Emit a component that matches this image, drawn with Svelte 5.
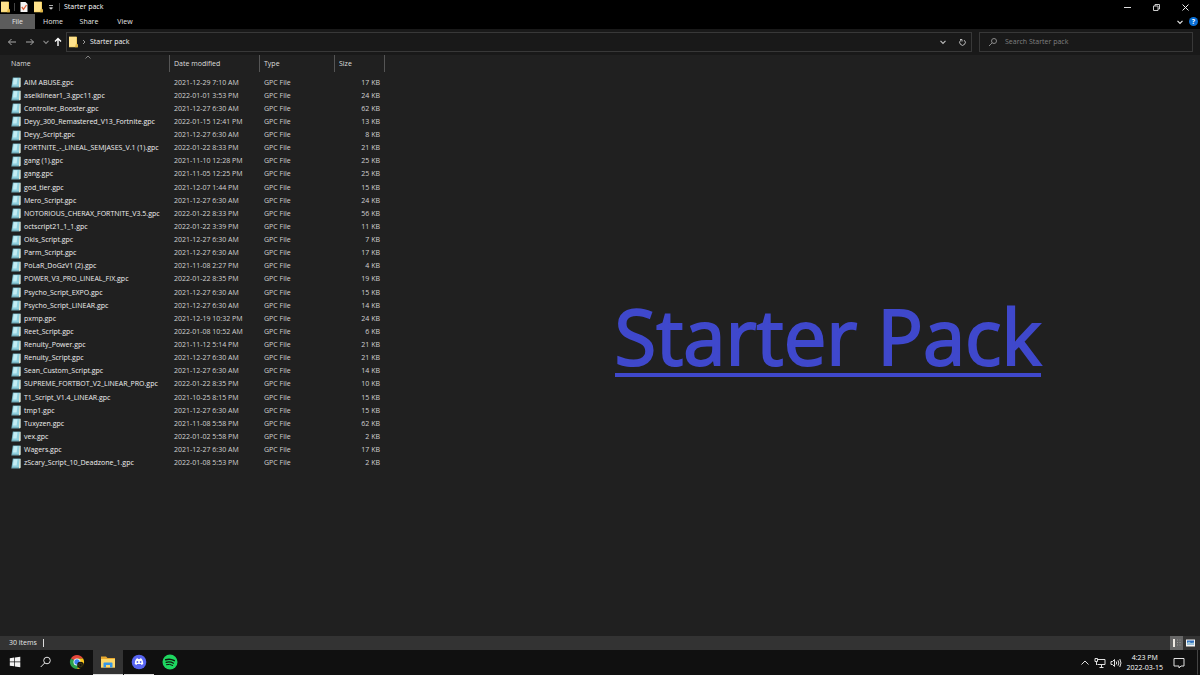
<script lang="ts">
  const tabs = ['Home', 'Share', 'View'];

  // name, date modified, size in KB
  const files: [string, string, number][] = [
    ['AIM ABUSE.gpc', '2021-12-29 7:10 AM', 17],
    ['aselklinear1_3.gpc11.gpc', '2022-01-01 3:53 PM', 24],
    ['Controller_Booster.gpc', '2021-12-27 6:30 AM', 62],
    ['Deyy_300_Remastered_V13_Fortnite.gpc', '2022-01-15 12:41 PM', 13],
    ['Deyy_Script.gpc', '2021-12-27 6:30 AM', 8],
    ['FORTNITE_-_LINEAL_SEMJASES_V.1 (1).gpc', '2022-01-22 8:33 PM', 21],
    ['gang (1).gpc', '2021-11-10 12:28 PM', 25],
    ['gang.gpc', '2021-11-05 12:25 PM', 25],
    ['god_tier.gpc', '2021-12-07 1:44 PM', 15],
    ['Mero_Script.gpc', '2021-12-27 6:30 AM', 24],
    ['NOTORIOUS_CHERAX_FORTNITE_V3.5.gpc', '2022-01-22 8:33 PM', 56],
    ['octscript21_1_1.gpc', '2022-01-22 3:39 PM', 11],
    ['Okis_Script.gpc', '2021-12-27 6:30 AM', 7],
    ['Parm_Script.gpc', '2021-12-27 6:30 AM', 17],
    ['PoLaR_DoGzV1 (2).gpc', '2021-11-08 2:27 PM', 4],
    ['POWER_V3_PRO_LINEAL_FIX.gpc', '2022-01-22 8:35 PM', 19],
    ['Psycho_Script_EXPO.gpc', '2021-12-27 6:30 AM', 15],
    ['Psycho_Script_LINEAR.gpc', '2021-12-27 6:30 AM', 14],
    ['pxmp.gpc', '2021-12-19 10:32 PM', 24],
    ['Reet_Script.gpc', '2022-01-08 10:52 AM', 6],
    ['Renuity_Power.gpc', '2021-11-12 5:14 PM', 21],
    ['Renuity_Script.gpc', '2021-12-27 6:30 AM', 21],
    ['Sean_Custom_Script.gpc', '2021-12-27 6:30 AM', 14],
    ['SUPREME_FORTBOT_V2_LINEAR_PRO.gpc', '2022-01-22 8:35 PM', 10],
    ['T1_Script_V1.4_LINEAR.gpc', '2021-10-25 8:15 PM', 15],
    ['tmp1.gpc', '2021-12-27 6:30 AM', 15],
    ['Tuxyzen.gpc', '2021-11-08 5:58 PM', 62],
    ['vex.gpc', '2022-01-02 5:58 PM', 2],
    ['Wagers.gpc', '2021-12-27 6:30 AM', 17],
    ['zScary_Script_10_Deadzone_1.gpc', '2022-01-08 5:53 PM', 2],
  ];

  let search = $state('');
</script>

{#snippet folder()}
  <svg width="10" height="12" viewBox="0 0 10 12" aria-hidden="true">
    <path d="M1 .8h8v7l.800.700v2.700H1z" fill="#f3cf62" />
    <path d="M1 .8h7v9.700H1z" fill="#ffe28c" />
    <path d="M7.800 8 9.800 9v2.200H7z" fill="#e3b745" />
  </svg>
{/snippet}

{#snippet chevron()}
  <svg width="8" height="8" viewBox="0 0 8 8" aria-hidden="true">
    <path d="M1.500 2.800 4 5.300l2.500-2.500" fill="none" stroke="currentColor" stroke-width="1.200" />
  </svg>
{/snippet}

<div class="explorer">
  <header class="titlebar">
    <div class="quick">
      {@render folder()}
      <span class="divider"></span>
      <button aria-label="Properties">
        <svg width="10" height="12" viewBox="0 0 10 12">
          <path d="M1.500 1h5l2 2v8h-7z" fill="#f4f4f4" />
          <path d="m2.800 6 1.700 2.300L7.500 4" fill="none" stroke="#e0643c" stroke-width="1.300" />
        </svg>
      </button>
      <button aria-label="New folder">{@render folder()}</button>
      <button aria-label="Customize toolbar">
        <svg width="8" height="8" viewBox="0 0 8 8">
          <path d="M2 2.500h4M2.500 4.800h3L4 6.300z" fill="#ddd" stroke="#ddd" stroke-width=".8" />
        </svg>
      </button>
      <span class="divider"></span>
      <span class="window-title">Starter pack</span>
    </div>
    <div class="window-buttons">
      <button aria-label="Minimize">
        <svg width="9" height="9" viewBox="0 0 9 9"><path d="M1 4.500h7" stroke="#ddd" /></svg>
      </button>
      <button aria-label="Restore">
        <svg width="9" height="9" viewBox="0 0 9 9" fill="none" stroke="#ccc">
          <path d="M1.500 3h4.500v4.500H1.500zM3 3V1.500h4.500V6H6" />
        </svg>
      </button>
      <button aria-label="Close">
        <svg width="9" height="9" viewBox="0 0 9 9"><path d="m1.500 1.500 6 6m0-6-6 6" stroke="#eee" /></svg>
      </button>
    </div>
  </header>

  <nav class="ribbon">
    <button class="file">File</button>
    {#each tabs as tab}
      <button>{tab}</button>
    {/each}
    <div class="ribbon-end">
      <button aria-label="Expand ribbon">{@render chevron()}</button>
      <button class="help" aria-label="Help">?</button>
    </div>
  </nav>

  <div class="address-row">
    <div class="nav-buttons">
      <button aria-label="Back">
        <svg width="10" height="10" viewBox="0 0 10 10"><path d="M9 5H1.500M4.500 2l-3 3 3 3" /></svg>
      </button>
      <button aria-label="Forward">
        <svg width="10" height="10" viewBox="0 0 10 10"><path d="M1 5h7.500M5.500 2l3 3-3 3" /></svg>
      </button>
      <button class="recent" aria-label="Recent locations">{@render chevron()}</button>
      <button class="up" aria-label="Up">
        <svg width="10" height="10" viewBox="0 0 10 10"><path d="M5 9V1.500M2 4.500l3-3 3 3" /></svg>
      </button>
    </div>
    <div class="address">
      {@render folder()}
      <svg width="6" height="8" viewBox="0 0 6 8" aria-hidden="true">
        <path d="m2 2 2 2-2 2" fill="none" stroke="#999" />
      </svg>
      <a href="#starter-pack">Starter pack</a>
      <button class="history" aria-label="Previous locations">{@render chevron()}</button>
      <button class="refresh" aria-label="Refresh">
        <svg width="9" height="9" viewBox="0 0 9 9" fill="none" stroke="#bbb">
          <path d="M6.200 2.200a2.800 2.800 0 1 1-3.400 0M2 1.500h2v2" />
        </svg>
      </button>
    </div>
    <label class="search">
      <svg width="10" height="10" viewBox="0 0 10 10" fill="none" stroke="#888" aria-hidden="true">
        <circle cx="6" cy="4" r="2.500" />
        <path d="M4.200 5.800 1 9" />
      </svg>
      <input type="text" aria-label="Search" placeholder="Search Starter pack" bind:value={search} />
    </label>
  </div>

  <main>
    <table>
      <colgroup>
        <col class="col-name" />
        <col class="col-date" />
        <col class="col-type" />
        <col class="col-size" />
      </colgroup>
      <thead>
        <tr>
          <th class="sorted">
            Name
            <svg width="6" height="4" viewBox="0 0 6 4" aria-hidden="true">
              <path d="M.5 3.500 3 1l2.500 2.500" fill="none" stroke="#999" stroke-width=".8" />
            </svg>
          </th>
          <th>Date modified</th>
          <th>Type</th>
          <th>Size</th>
        </tr>
      </thead>
      <tbody>
        {#each files as [name, date, size]}
          <tr>
            <td class="name">
              <span>
                <svg width="10" height="11" viewBox="0 0 10 11" aria-hidden="true">
                  <path d="M1.800.5h7.700v9.200l-.8.800H.3z" fill="#6fa9b6" />
                  <path d="M2.400 1h6.400v8.300H1.200z" fill="#8fd0de" />
                  <path d="M2.800 1.300h3.700L5.600 7.500H2z" fill="#c4edf4" />
                  <path d="M8.600 1h.9v8.700l-1.500.6z" fill="#f1ead2" />
                </svg>
                {name}
              </span>
            </td>
            <td>{date}</td>
            <td>GPC File</td>
            <td class="size">{size} KB</td>
          </tr>
        {/each}
      </tbody>
    </table>
    <div class="banner">
      <h1>Starter Pack</h1>
    </div>
  </main>

  <footer class="status">
    <span>{files.length} items</span>
    <span class="status-divider"></span>
    <div class="views">
      <button class="active" aria-label="Details view">
        <svg width="13" height="14" viewBox="0 0 13 14">
          <path d="M3 3h2v8H3z" fill="#f0ece6" />
          <path d="M7 4h1M7 6.500h1M7 9h1M9.500 4h1M9.500 6.500h1M9.500 9h1" stroke="#989898" />
        </svg>
      </button>
      <button aria-label="Large icons view">
        <svg width="13" height="14" viewBox="0 0 13 14">
          <path d="M2 3.500h9v7H2z" fill="#f4f4f4" />
          <path d="M3 4.500h7v4H3z" fill="#2f6fc0" />
          <path d="M3 7 5 5.500l2 1.500 3-.5v2H3z" fill="#9fc7d8" />
        </svg>
      </button>
    </div>
  </footer>

  <footer class="taskbar">
    <button aria-label="Start">
      <svg width="12" height="12" viewBox="0 0 12 12" fill="#f4f4f4">
        <path d="M.8 2.200 5.300 1.600v4H.8zM6 1.500l5.300-.8v4.900H6zM.8 6.300h4.500v4L.8 9.700zM6 6.300h5.300v4.900L6 10.400z" />
      </svg>
    </button>
    <button aria-label="Search">
      <svg width="12" height="12" viewBox="0 0 12 12" fill="none" stroke="#e4e4e4">
        <circle cx="7" cy="4.500" r="3.300" />
        <path d="M4.700 7 .7 11" />
      </svg>
    </button>
    <button aria-label="Chrome">
      <svg width="16" height="16" viewBox="0 0 16 16">
        <path d="M8 8 1.900 4.500A7 7 0 0 1 14.100 4.500L8 4.500z" fill="#e5483b" />
        <path d="M1.900 4.500A7 7 0 0 0 8 15l3-5.200L8 8z" fill="#2ba24c" />
        <path d="M14.100 4.500A7 7 0 0 1 8 15l3-5.200L8 4.500z" fill="#fbc71c" />
        <circle cx="8" cy="8" r="3.500" fill="#fff" />
        <circle cx="8" cy="8" r="2.700" fill="#3c82f0" />
        <circle cx="11.500" cy="11" r="3.300" fill="#17160c" />
        <circle cx="11.500" cy="11" r="1.700" fill="none" stroke="#4a431a" stroke-width=".8" />
      </svg>
    </button>
    <button class="current" aria-label="File Explorer">
      <svg width="16" height="16" viewBox="0 0 16 16">
        <path d="M1 2.500h5l1.500 1.500H15v9.500H1z" fill="#e8a92f" />
        <path d="M1 5h14v8.500H1z" fill="#ffd968" />
        <path d="M3.500 13.500V9.300q0-.8.8-.8h7.400q.8 0 .8.800v4.200H10V11H6v2.500z" fill="#3698e8" />
      </svg>
    </button>
    <button class="open" aria-label="Discord">
      <svg width="16" height="16" viewBox="0 0 16 16">
        <circle cx="8" cy="8" r="7.300" fill="#5865f2" />
        <path d="M5.200 4.800 6.800 4.300 7.200 5h1.600l.4-.7 1.600.5q1.700 2.500 1.500 5.300L10.500 11l-.6-1H6.100l-.6 1-1.800-.9Q3.500 7.300 5.200 4.800z" fill="#fff" />
        <ellipse cx="6.400" cy="8" rx=".9" ry="1" fill="#5865f2" />
        <ellipse cx="9.600" cy="8" rx=".9" ry="1" fill="#5865f2" />
      </svg>
    </button>
    <button aria-label="Spotify">
      <svg width="16" height="16" viewBox="0 0 16 16">
        <circle cx="8" cy="8" r="7.500" fill="#1ed760" />
        <g fill="none" stroke="#10170f" stroke-linecap="round">
          <path d="M3.700 5.800q4.500-1.400 8.700.9" stroke-width="1.500" />
          <path d="M4.100 8.300q4-1.100 7.400.9" stroke-width="1.200" />
          <path d="M4.500 10.600q3.300-.9 6.200.8" />
        </g>
      </svg>
    </button>

    <div class="tray">
      <button aria-label="Show hidden icons">
        <svg width="10" height="10" viewBox="0 0 10 10"><path d="m1.500 6.500 3.500-3.500 3.500 3.500" /></svg>
      </button>
      <button aria-label="Network">
        <svg width="12" height="12" viewBox="0 0 12 12">
          <path d="M4 2.500h7v5H3.500M7.500 7.500v2.500M5.500 10.500h4M1 1.500h2.500v3H1zM2.500 4.500V8" />
        </svg>
      </button>
      <button aria-label="Volume">
        <svg width="12" height="12" viewBox="0 0 12 12">
          <path d="M1 4.500h1.500l2-2v7l-2-2H1zM6.200 4.500q1 1.500 0 3M8 3.300q1.700 2.700 0 5.400M9.800 2q2.400 4 0 8" />
        </svg>
      </button>
      <time datetime="2022-03-15T16:23">4:23 PM<br />2022-03-15</time>
      <button aria-label="Notifications">
        <svg width="12" height="12" viewBox="0 0 12 12">
          <path d="M1 1.500h10v7.500H8L6 11V9H1z" />
        </svg>
      </button>
    </div>
    <button class="show-desktop" aria-label="Show desktop"></button>
  </footer>
</div>

<style>
  :global(body) {
    margin: 0;
    background: #202020;
  }
  .explorer {
    display: flex;
    flex-direction: column;
    min-height: 100vh;
    color: #e6e6e6;
    font-family: "Open Sans", "Noto Sans", sans-serif;
    font-size: 7px;
    line-height: 10px;
  }
  svg {
    display: block;
    flex: none;
  }
  button {
    display: flex;
    align-items: center;
    justify-content: center;
    padding: 0;
    border: none;
    background: none;
    color: inherit;
    font: inherit;
  }

  .titlebar {
    display: flex;
    justify-content: space-between;
    height: 14px;
    background: #000;
  }
  .quick {
    display: flex;
    align-items: center;
    gap: 4px;
  }
  .divider {
    width: 1px;
    height: 8px;
    background: #444;
  }
  .window-title {
    color: #fff;
  }
  .window-buttons {
    display: flex;
  }
  .window-buttons button {
    width: 29px;
  }

  .ribbon {
    display: flex;
    height: 15px;
    background: #000;
  }
  .ribbon button {
    width: 36px;
  }
  .ribbon .file {
    width: 35px;
    background: #5c5c5c;
  }
  .ribbon-end {
    display: flex;
    align-items: center;
    gap: 5px;
    margin-left: auto;
    padding-right: 2px;
  }
  .ribbon-end button {
    width: 9px;
    height: 9px;
  }
  .ribbon-end .help {
    border-radius: 50%;
    background: #0a6fd6;
    color: #fff;
    font-weight: bold;
  }

  .address-row {
    display: flex;
    align-items: center;
    gap: 7px;
    height: 26px;
    padding-right: 7px;
    background: #191919;
  }
  .nav-buttons {
    display: flex;
    align-items: center;
    gap: 8px;
    padding-left: 7px;
  }
  .nav-buttons svg {
    fill: none;
    stroke: #aaa;
  }
  .nav-buttons .recent {
    width: 5px;
    color: #888;
  }
  .nav-buttons .up svg {
    stroke: #fff;
    stroke-width: 1.4;
  }
  .nav-buttons .up {
    margin-left: -3px;
  }
  .address {
    display: flex;
    flex: 1;
    align-items: center;
    gap: 3px;
    height: 18px;
    margin-left: -4px;
    padding-left: 1px;
    border: 1px solid #383838;
  }
  .address a {
    color: #f4f4f4;
    text-decoration: none;
  }
  .history {
    margin-left: auto;
    padding-right: 3px;
    color: #bbb;
  }
  .refresh {
    width: 18px;
    height: 18px;
  }
  .search {
    display: flex;
    align-items: center;
    gap: 7px;
    width: 204px;
    height: 18px;
    padding-left: 8px;
    border: 1px solid #383838;
  }
  .search input {
    flex: 1;
    min-width: 0;
    padding: 0;
    border: none;
    outline: none;
    background: none;
    color: #e6e6e6;
    font: inherit;
  }
  .search input::placeholder {
    color: #808080;
    opacity: 1;
  }

  main {
    display: flex;
    flex: 1;
    align-items: flex-start;
  }
  table {
    flex: none;
    width: 385px;
    height: 415px;
    border-spacing: 0;
    table-layout: fixed;
  }
  .col-name {
    width: 170px;
  }
  .col-date {
    width: 90px;
  }
  .col-type {
    width: 75px;
  }
  .col-size {
    width: 50px;
  }
  thead tr {
    height: 17px;
  }
  thead::after {
    display: block;
    height: 4px;
    content: "";
  }
  th {
    position: relative;
    padding: 0 4px;
    border-right: 1px solid #555;
    color: #dedede;
    font-weight: normal;
    text-align: left;
  }
  .sorted {
    padding-left: 11px;
  }
  .sorted svg {
    position: absolute;
    top: 0;
    left: 50%;
  }
  td {
    padding: 0 5px 0 4px;
    color: #d2d2d2;
    white-space: nowrap;
  }
  .name {
    padding-left: 11px;
    color: #f0f0f0;
  }
  .name span {
    display: flex;
    align-items: center;
    gap: 3px;
  }
  .size {
    text-align: right;
  }

  .banner {
    display: flex;
    flex: 1;
    align-self: stretch;
    align-items: center;
    justify-content: center;
    padding: 0 0 16px 71px;
  }
  h1 {
    margin: 0;
    border-bottom: 4px solid #3f48cc;
    color: #3f48cc;
    font-size: 76px;
    font-weight: normal;
    line-height: 74px;
    -webkit-text-stroke: 2px #3f48cc;
  }

  .status {
    display: flex;
    align-items: center;
    gap: 6px;
    height: 14px;
    padding-left: 9px;
    background: #333;
  }
  .status-divider {
    width: 1px;
    height: 8px;
    background: #ddd;
  }
  .views {
    display: flex;
    gap: 1px;
    margin-left: auto;
    padding-right: 3px;
  }
  .views .active {
    background: #666;
  }

  .taskbar {
    display: flex;
    gap: 1px;
    height: 25px;
    background: #101010;
  }
  .taskbar > button {
    box-sizing: border-box;
    width: 30px;
    border-bottom: 1px solid transparent;
  }
  .taskbar .current {
    border-color: #ddd;
    background: #333;
  }
  .taskbar .open {
    border-color: #ddd;
  }
  .tray {
    display: flex;
    align-items: center;
    gap: 4px;
    margin-left: auto;
    padding-right: 11px;
  }
  .tray svg {
    fill: none;
    stroke: #e0e0e0;
  }
  .tray time {
    margin-right: 6px;
    color: #fff;
    text-align: center;
  }
  .taskbar .show-desktop {
    width: 3px;
    border-left: 1px solid #444;
  }
</style>
